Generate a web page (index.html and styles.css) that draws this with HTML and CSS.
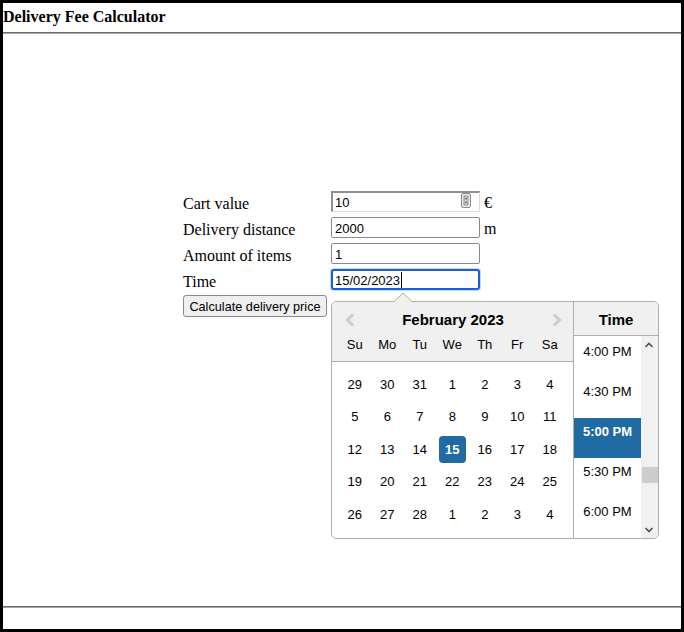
FILE: index.html
```html
<!DOCTYPE html>
<html lang="en">
<head>
<meta charset="utf-8">
<title>Delivery Fee Calculator</title>
<link rel="stylesheet" href="styles.css">
</head>
<body>
<div class="frame">
  <header class="top">
    <h1 class="title">Delivery Fee Calculator</h1>
  </header>
  <hr class="rule">
  <main class="main">
    <form class="calc">
      <label class="lbl">Cart value</label>
      <div class="field field-num">
        <span class="val">10</span>
        <svg class="spin" width="10" height="15" viewBox="0 0 10 15">
          <rect x="0.5" y="0.5" width="9" height="14" rx="1.5" fill="#ececec" stroke="#8c8c8c"/>
          <rect x="3" y="3" width="4" height="9" fill="#d6d6d6" stroke="#7a7a7a" stroke-width="0.8"/>
          <path d="M3.6 6.2 L5 4.6 L6.4 6.2 Z M3.6 8.8 L5 10.4 L6.4 8.8 Z" fill="#555"/>
        </svg>
      </div>
      <span class="unit">€</span>

      <label class="lbl">Delivery distance</label>
      <div class="field"><span class="val">2000</span></div>
      <span class="unit">m</span>

      <label class="lbl">Amount of items</label>
      <div class="field"><span class="val">1</span></div>
      <span class="unit"></span>

      <label class="lbl">Time</label>
      <div class="field field-focus">
        <span class="val">15/02/2023</span><span class="caret"></span>
        <div class="picker">
          <svg class="tri" width="18" height="10" viewBox="0 0 18 10">
            <polygon points="0,10 9,1 18,10" fill="#f0f0f0"/>
            <polyline points="0,9.5 9,1 18,9.5" fill="none" stroke="#aeaeae"/>
          </svg>
          <div class="month">
            <div class="m-head">
              <svg class="nav nav-prev" width="10" height="14" viewBox="0 0 10 14"><polyline points="8,1.5 2.5,7 8,12.5" fill="none" stroke="#cccccc" stroke-width="3"/></svg>
              <svg class="nav nav-next" width="10" height="14" viewBox="0 0 10 14"><polyline points="2,1.5 7.5,7 2,12.5" fill="none" stroke="#cccccc" stroke-width="3"/></svg>
              <div class="m-title">February 2023</div>
              <div class="dnames">
                <span>Su</span><span>Mo</span><span>Tu</span><span>We</span><span>Th</span><span>Fr</span><span>Sa</span>
              </div>
            </div>
            <div class="days">
              <span>29</span><span>30</span><span>31</span><span>1</span><span>2</span><span>3</span><span>4</span>
              <span>5</span><span>6</span><span>7</span><span>8</span><span>9</span><span>10</span><span>11</span>
              <span>12</span><span>13</span><span>14</span><span class="sel"><b>15</b></span><span>16</span><span>17</span><span>18</span>
              <span>19</span><span>20</span><span>21</span><span>22</span><span>23</span><span>24</span><span>25</span>
              <span>26</span><span>27</span><span>28</span><span>1</span><span>2</span><span>3</span><span>4</span>
            </div>
          </div>
          <div class="timecol">
            <div class="t-head">Time</div>
            <div class="t-body">
              <ul class="t-list">
                <li>4:00 PM</li>
                <li>4:30 PM</li>
                <li class="t-sel">5:00 PM</li>
                <li>5:30 PM</li>
                <li>6:00 PM</li>
              </ul>
              <div class="sbar">
                <svg class="sb-up" width="10" height="6" viewBox="0 0 10 6"><polyline points="1.5,5 5,1.5 8.5,5" fill="none" stroke="#505050" stroke-width="1.6"/></svg>
                <div class="sb-thumb"></div>
                <svg class="sb-down" width="10" height="6" viewBox="0 0 10 6"><polyline points="1.5,1 5,4.5 8.5,1" fill="none" stroke="#505050" stroke-width="1.6"/></svg>
              </div>
            </div>
          </div>
        </div>
      </div>
      <span class="unit"></span>

      <button type="button" class="btn">Calculate delivery price</button>
    </form>
  </main>
  <hr class="rule">
  <footer class="foot"></footer>
</div>
</body>
</html>
```
FILE: styles.css
```css
* { box-sizing: border-box; }
html, body { margin: 0; padding: 0; background: #fff; }
body { font-family: "Liberation Serif", "Times New Roman", serif; color: #000; }

.frame {
  width: 684px;
  height: 632px;
  border: 3px solid #000;
  display: flex;
  flex-direction: column;
}

.top { height: 29px; padding-top: 5px; }
.title {
  margin: 0;
  font-size: 16px;
  line-height: 18px;
  font-weight: bold;
}

.rule {
  margin: 0;
  height: 2px;
  border: 0;
  border-top: 1px solid #6b6b6b;
  border-bottom: 1px solid #a4a4a4;
}

.main { flex: 1; padding-top: 157px; }
.foot { height: 21px; }

.calc {
  display: grid;
  grid-template-columns: 148px 149px auto;
  grid-template-rows: repeat(4, 21px) 22px;
  row-gap: 5px;
  margin-left: 180px;
  width: 330px;
}

.lbl { font-size: 16px; line-height: 21px; padding-top: 2px; }
.unit { font-size: 16px; line-height: 21px; padding-top: 1px; padding-left: 4px; }

.field {
  position: relative;
  height: 21px;
  border: 1px solid #8a8a8a;
  border-radius: 2px;
  padding-left: 3px;
  padding-top: 1px;
  font-family: "Liberation Sans", Arial, sans-serif;
  font-size: 13px;
  line-height: 19px;
  background: #fff;
}
.field-num {
  border-width: 2px 1px 1px 2px;
  border-color: #8f8f8f #dcdcdc #dcdcdc #8f8f8f;
  border-radius: 0;
  line-height: 18px;
  padding-left: 2px;
}
.spin { position: absolute; left: 128px; top: 0px; }

.field-focus {
  border: 2px solid #1a62d0;
  border-radius: 3px;
  padding-left: 2px;
  line-height: 17px;
  box-shadow: 0 0 0 1px #c3d8f4;
}
.caret {
  display: inline-block;
  width: 1px;
  height: 16px;
  background: #000;
  vertical-align: -3px;
  margin-left: 1px;
}

.btn {
  grid-column: 1;
  justify-self: start;
  width: 144px;
  height: 22px;
  padding: 1px 0 0;
  font-family: "Liberation Sans", Arial, sans-serif;
  font-size: 12.7px;
  color: #000;
  background: #efefef;
  border: 1px solid #8a8a8a;
  border-radius: 3px;
}

/* date picker */
.picker {
  position: absolute;
  left: -2px;
  top: 30px;
  display: flex;
  border: 1px solid #aeaeae;
  border-radius: 5px;
  background: #fff;
  font-family: "Liberation Sans", Arial, sans-serif;
  font-size: 13px;
  line-height: 15px;
  color: #000;
  z-index: 2;
}
.tri { position: absolute; left: 62px; top: -10px; }

.month { width: 241px; }
.m-head {
  position: relative;
  height: 60px;
  padding-top: 8px;
  background: #f0f0f0;
  border-bottom: 1px solid #aeaeae;
  border-top-left-radius: 4px;
}
.nav { position: absolute; top: 11px; }
.nav-prev { left: 13px; }
.nav-next { left: 220px; }
.m-title {
  text-align: center;
  font-weight: bold;
  font-size: 15px;
  line-height: 20px;
  padding-left: 1px;
}
.dnames {
  display: grid;
  grid-template-columns: repeat(7, 32.5px);
  padding-left: 6.5px;
  line-height: 30px;
  text-align: center;
}

.days {
  display: grid;
  grid-template-columns: repeat(7, 32.5px);
  grid-auto-rows: 32.5px;
  padding: 5.75px 0 0 6.5px;
  text-align: center;
}
.days span { display: flex; align-items: center; justify-content: center; }
.days .sel b {
  display: flex;
  align-items: center;
  justify-content: center;
  width: 27px;
  height: 27px;
  border-radius: 4px;
  background: #216ba5;
  color: #fff;
}

.timecol { width: 85px; border-left: 1px solid #aeaeae; }
.t-head {
  height: 34px;
  padding-top: 8px;
  background: #f0f0f0;
  border-bottom: 1px solid #aeaeae;
  border-top-right-radius: 4px;
  text-align: center;
  font-weight: bold;
  font-size: 15px;
  line-height: 20px;
}
.t-body { display: flex; height: 202px; }
.t-list {
  list-style: none;
  margin: 0;
  padding: 2px 0 0;
  width: 67px;
  overflow: hidden;
}
.t-list li {
  height: 40px;
  padding-top: 6px;
  text-align: center;
}
.t-list .t-sel { background: #216ba5; color: #fff; font-weight: bold; }

.sbar {
  position: relative;
  width: 17px;
  background: #f1f1f1;
  border-bottom-right-radius: 4px;
}
.sb-up { position: absolute; left: 3px; top: 6px; }
.sb-down { position: absolute; left: 3px; bottom: 5px; }
.sb-thumb {
  position: absolute;
  left: 1px;
  right: 0;
  top: 131px;
  height: 16px;
  background: #cdcdcd;
}
```
